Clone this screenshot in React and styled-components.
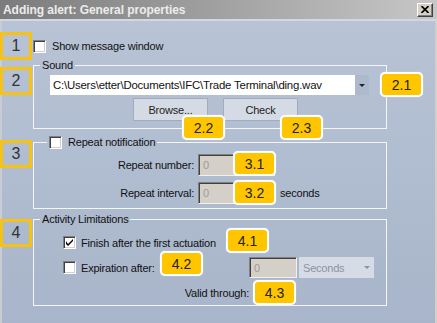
import React from 'react'
import styled, { createGlobalStyle } from 'styled-components'

const GlobalStyle = createGlobalStyle`
  html, body {
    margin: 0;
    padding: 0;
    background: #ffffff;
  }
  body {
    font-family: 'Liberation Sans', Arial, sans-serif;
  }
`

const Window = styled.div`
  position: relative;
  width: 437px;
  height: 323px;
  overflow: hidden;
  display: flex;
  flex-direction: column;
  font-family: 'Liberation Sans', Arial, sans-serif;
  font-size: 11px;
  letter-spacing: -0.2px;
  color: #111;
`

const TitleBar = styled.div`
  flex: none;
  height: 21px;
  box-sizing: border-box;
  display: flex;
  align-items: center;
  justify-content: space-between;
  padding: 0 4px 0 3px;
  background: linear-gradient(to right, #7b7b7b, #c7c7c7);
  border-bottom: 2px solid #d2d8e2;
`

const Title = styled.span`
  color: #ececec;
  font-size: 12px;
  font-weight: bold;
  letter-spacing: -0.05px;
  padding-top: 1px;
`

const CloseButton = styled.div`
  width: 16px;
  height: 14px;
  box-sizing: border-box;
  background: #d4d0c8;
  border: 1px solid;
  border-color: #ffffff #404040 #404040 #ffffff;
  box-shadow: inset -1px -1px #808080;
  display: flex;
  align-items: center;
  justify-content: center;
`

const Body = styled.div`
  flex: 1;
  background: linear-gradient(#b8c3d5, #a8b5ca);
  box-shadow: inset 2px 0 #c9cdd3, inset -2px 0 #d4d0c8;
  padding-top: 11px;
  display: flex;
  flex-direction: column;
`

const Section = styled.div`
  display: grid;
  grid-template-columns: 33px 354px;
  align-items: ${p => (p.$center ? 'center' : 'start')};
  margin-top: ${p => p.$top || 0}px;
`

const NumberBox = styled.div`
  width: 32px;
  height: 28px;
  box-sizing: border-box;
  border: 3px solid #f6c213;
  display: flex;
  align-items: center;
  justify-content: center;
  font-size: 16px;
  letter-spacing: 0;
  color: #333;
  margin-top: ${p => p.$offset || 0}px;
`

const CheckRow = styled.label`
  display: flex;
  align-items: center;
  gap: ${p => p.$gap || 5}px;
  padding-left: ${p => p.$indent || 0}px;
  white-space: nowrap;
`

const Box = styled.span`
  flex: none;
  width: 13px;
  height: 13px;
  box-sizing: border-box;
  background: #ffffff;
  border: 1px solid;
  border-color: #808080 #ffffff #ffffff #808080;
  box-shadow: inset 1px 1px #404040, inset -1px -1px #d4d0c8;
  display: flex;
  align-items: center;
  justify-content: center;
`

const Group = styled.fieldset`
  margin: 0;
  min-width: 0;
  width: 354px;
  box-sizing: border-box;
  border: 1px solid #f3f5f9;
  padding: ${p => p.$pad};
`

const Legend = styled.legend`
  margin-left: ${p => p.$left || 6}px;
  padding: 0 2px;
  height: 14px;
  line-height: 14px;
  display: flex;
  align-items: center;
`

const Combo = styled.div`
  margin-left: 16px;
  width: 319px;
  height: 20px;
  box-sizing: border-box;
  background: #ffffff;
  display: flex;
  align-items: center;
  justify-content: space-between;
  padding-left: 3px;
  font-size: 11.4px;
  white-space: nowrap;
  overflow: hidden;
`

const ComboArrow = styled.span`
  flex: none;
  width: 14px;
  align-self: stretch;
  background: ${p => (p.$muted ? 'transparent' : '#adb9cc')};
  display: flex;
  align-items: center;
  justify-content: center;
  &::after {
    content: '';
    border-left: 3px solid transparent;
    border-right: 3px solid transparent;
    border-top: 3px solid ${p => (p.$muted ? '#8a93a0' : '#222')};
  }
`

const ButtonRow = styled.div`
  display: flex;
  gap: 15px;
  padding-left: 99px;
  margin-top: 3px;
`

const Button = styled.div`
  width: 75px;
  height: 23px;
  box-sizing: border-box;
  background: #d5dbe5;
  border: 1px solid #a2acbc;
  display: flex;
  align-items: center;
  justify-content: center;
  color: #222;
`

const RepeatGrid = styled.div`
  display: grid;
  grid-template-columns: 160px 77px auto;
  grid-auto-rows: 22px;
  column-gap: 4px;
  row-gap: 6px;
  align-items: center;
`

const FieldLabel = styled.span`
  justify-self: end;
  white-space: nowrap;
  color: #111;
`

const Unit = styled.span`
  margin-left: 1px;
`

const NumberInput = styled.div`
  height: ${p => p.$h || 22}px;
  box-sizing: border-box;
  background: #d4d0c8;
  border: 1px solid;
  border-color: #808080 #f0f0f0 #f0f0f0 #808080;
  box-shadow: inset 1px 1px #404040;
  color: #9b9b9b;
  padding-left: 4px;
  display: flex;
  align-items: center;
`

const LimitGrid = styled.div`
  display: grid;
  grid-template-columns: 215px 48px 77px;
  grid-auto-rows: 21px;
  row-gap: 4px;
  align-items: center;
`

const SelectBox = styled.div`
  margin-left: 2px;
  height: 21px;
  box-sizing: border-box;
  background: #d6dce6;
  color: #8a93a0;
  display: flex;
  align-items: center;
  justify-content: space-between;
  padding-left: 4px;
`

const Callout = styled.div`
  position: absolute;
  width: 43px;
  height: 25px;
  box-sizing: border-box;
  background: #ffc600;
  border: 2px solid #ffffff;
  border-radius: 5px;
  box-shadow: 0 0 1px rgba(255, 255, 255, 0.8);
  display: flex;
  align-items: center;
  justify-content: center;
  font-size: 14px;
  letter-spacing: 0;
  color: #222;
`

const callouts = [
  { id: '2.1', x: 380, y: 72 },
  { id: '2.2', x: 182, y: 115 },
  { id: '2.3', x: 280, y: 115 },
  { id: '3.1', x: 233, y: 151 },
  { id: '3.2', x: 233, y: 180 },
  { id: '4.1', x: 226, y: 228 },
  { id: '4.2', x: 160, y: 251 },
  { id: '4.3', x: 253, y: 280 },
]

function Check({ checked }) {
  return (
    <Box>
      {checked && (
        <svg width="7" height="7" viewBox="0 0 7 7">
          <path d="M0 2 L0 5 L2 7 L7 2 L7 0 L2 5 Z" fill="#000" />
        </svg>
      )}
    </Box>
  )
}

export default function App() {
  return (
    <Window>
      <GlobalStyle />
      <TitleBar>
        <Title>Adding alert: General properties</Title>
        <CloseButton>
          <svg width="8" height="7" viewBox="0 0 8 7">
            <path d="M0.5 0 L7.5 7 M7.5 0 L0.5 7" stroke="#000" strokeWidth="1.6" />
          </svg>
        </CloseButton>
      </TitleBar>
      <Body>
        <Section $center>
          <NumberBox>1</NumberBox>
          <CheckRow $gap={6}>
            <Check />
            Show message window
          </CheckRow>
        </Section>

        <Section $top={-2}>
          <NumberBox $offset={9}>2</NumberBox>
          <Group $pad="3px 0 7px 0">
            <Legend>Sound</Legend>
            <Combo>
              C:\Users\etter\Documents\IFC\Trade Terminal\ding.wav
              <ComboArrow />
            </Combo>
            <ButtonRow>
              <Button>Browse...</Button>
              <Button>Check</Button>
            </ButtonRow>
          </Group>
        </Section>

        <Section $top={6}>
          <NumberBox $offset={5}>3</NumberBox>
          <Group $pad="5px 0 4px 0">
            <Legend $left={13}>
              <CheckRow $gap={6}>
                <Check />
                Repeat notification
              </CheckRow>
            </Legend>
            <RepeatGrid>
              <FieldLabel>Repeat number:</FieldLabel>
              <NumberInput>0</NumberInput>
              <span />
              <FieldLabel>Repeat interval:</FieldLabel>
              <NumberInput>0</NumberInput>
              <Unit>seconds</Unit>
            </RepeatGrid>
          </Group>
        </Section>

        <Section $top={3}>
          <NumberBox $offset={7}>4</NumberBox>
          <Group $pad="6px 0 2px 0">
            <Legend>Activity Limitations</Legend>
            <LimitGrid>
              <CheckRow $indent={29}>
                <Check checked />
                Finish after the first actuation
              </CheckRow>
              <span />
              <span />
              <CheckRow $indent={29}>
                <Check />
                Expiration after:
              </CheckRow>
              <NumberInput $h={21}>0</NumberInput>
              <SelectBox>
                Seconds
                <ComboArrow $muted />
              </SelectBox>
              <FieldLabel>Valid through:</FieldLabel>
            </LimitGrid>
          </Group>
        </Section>
      </Body>

      {callouts.map(c => (
        <Callout key={c.id} style={{ left: c.x, top: c.y }}>
          {c.id}
        </Callout>
      ))}
    </Window>
  )
}
